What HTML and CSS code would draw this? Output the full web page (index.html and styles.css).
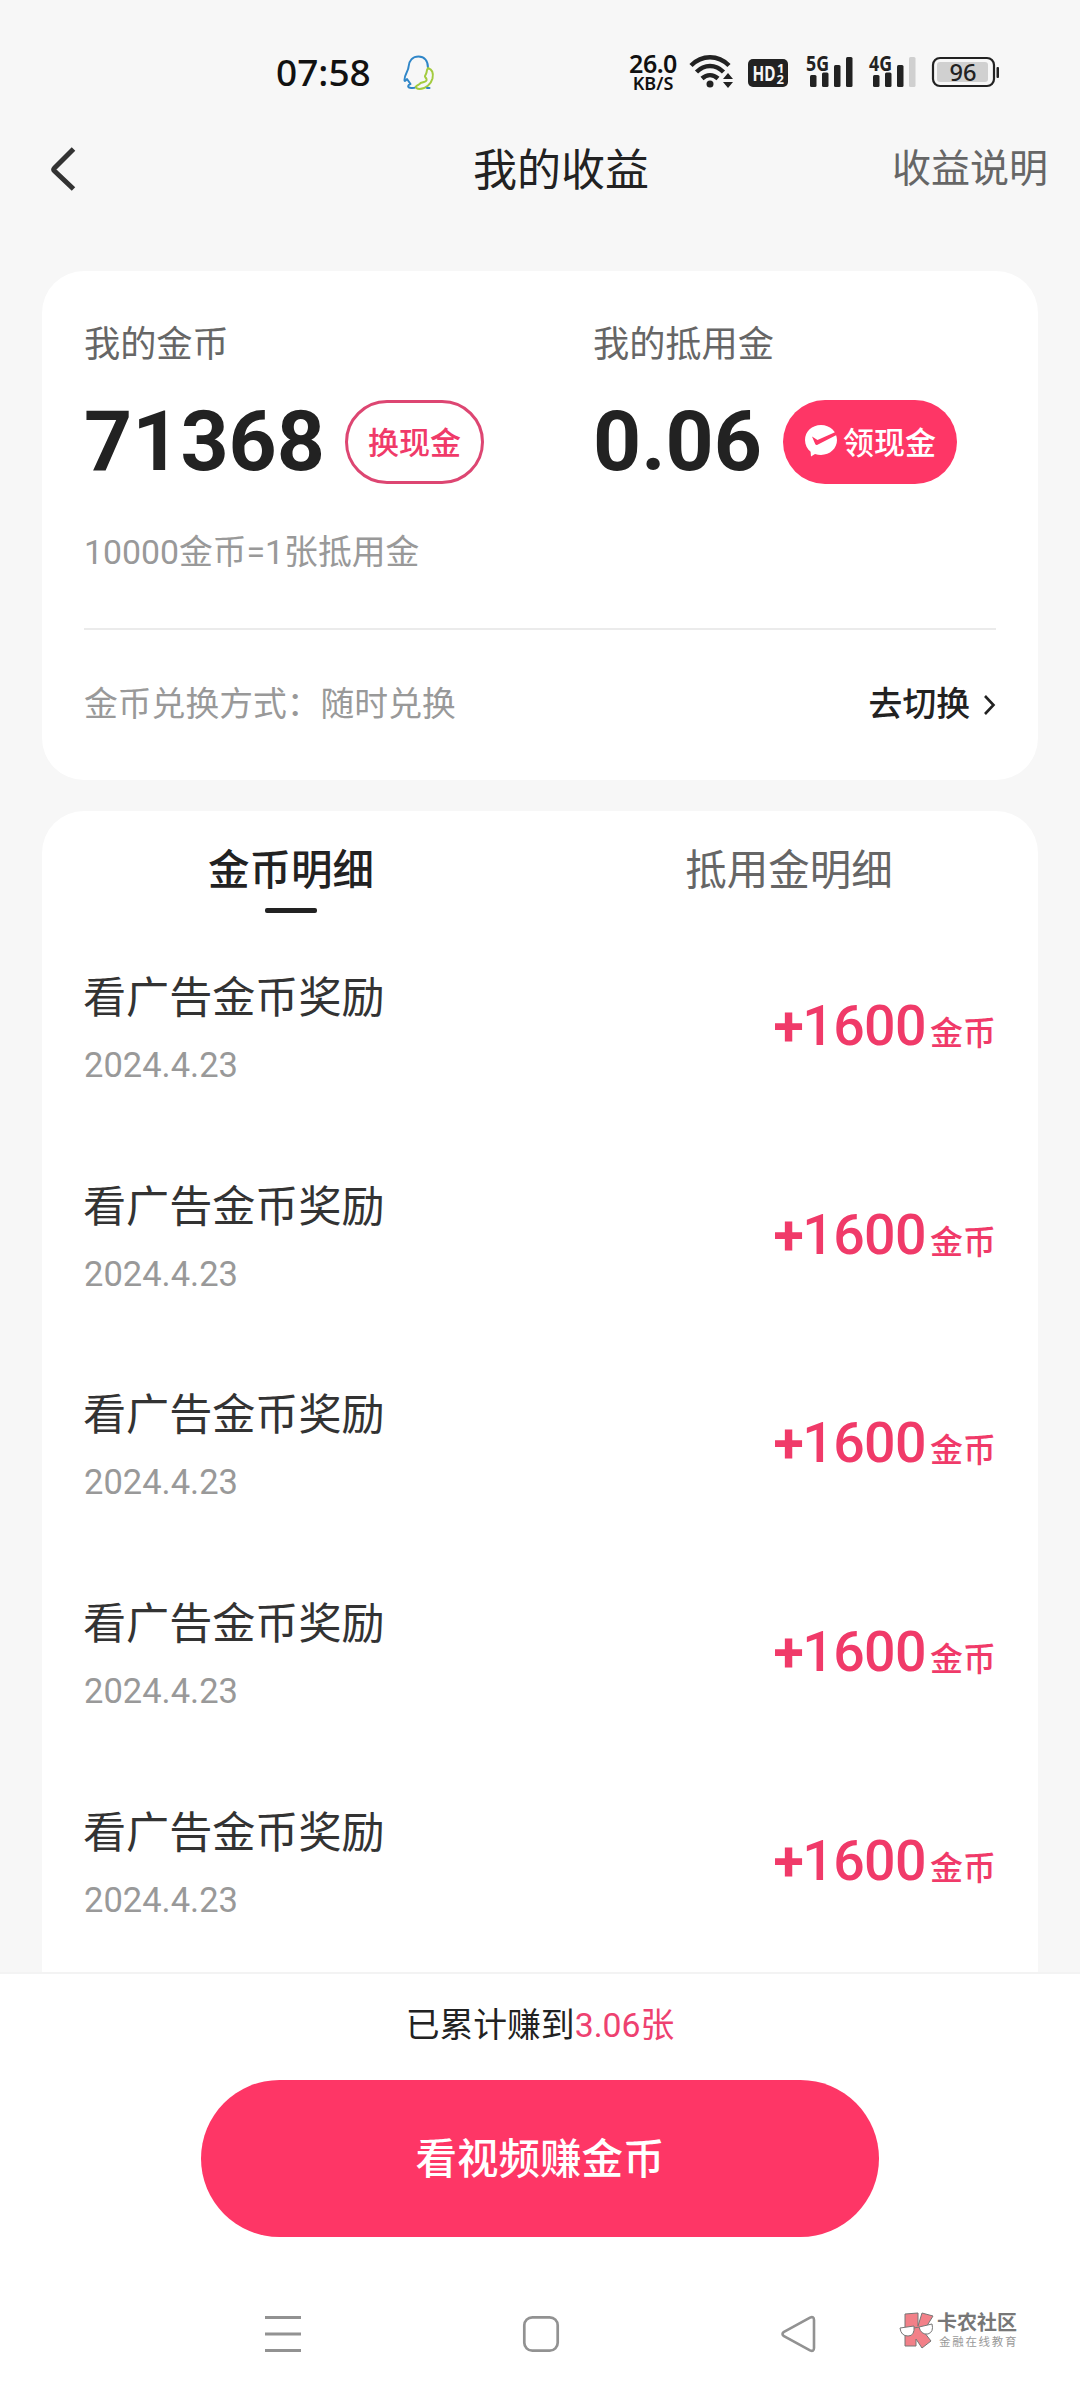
FILE: index.html
```html
<!DOCTYPE html>
<html lang="zh-CN">
<head>
<meta charset="utf-8">
<title>我的收益</title>
<link rel="stylesheet" href="styles.css">
</head>
<body>
<div class="screen">
  <div class="status">
    <span class="time">07:58</span>
    <svg class="qq" width="34" height="38" viewBox="0 0 34 38" fill="none" stroke-width="2" stroke-linejoin="round" stroke-linecap="round">
      <path stroke="#2f86c8" d="M26 14C26 6.500 22 2.500 16.500 2.500S7 6.500 6.500 13C6.500 17 2.500 20 2.500 26c0 1.500 1 1 2.500-1l3.500 5c-3 1-3 3.500-.5 3.800 2 .4 4.500.2 6-.8"/>
      <path stroke="#a3cb3f" d="M26 14c4.500 1.500 5.500 6 4.500 10.500C29 30 24 35 17.500 35c-2.500 0-4-1.500-3.500-2.500 1-1.500 4-2 4.500-3.500L22 28c2-.5 3-1.500 2.500-3s-2-2-1.500-3 1-1.500 1.500-3.500c.4-1.500 0-2.500 1.500-4.500z"/>
      <path stroke="#2f86c8" d="M25 34h2.500"/>
    </svg>
    <div class="speed"><span class="speed-value">26.0</span><span class="speed-unit">KB/S</span></div>
    <svg class="wifi" width="46" height="36" viewBox="0 0 46 36">
      <g fill="none" stroke="#222" stroke-width="4.500">
        <path d="M2 12.500C13 1.500 29 1.500 40 12.500"/>
        <path d="M7.500 19c8-8 19-8 27 0"/>
        <path d="M13 25.500c5-4.500 11-4.500 16 0"/>
      </g>
      <circle cx="21" cy="31" r="3.500" fill="#222"/>
      <path fill="#222" d="M34 26l5-6 5 6zM34 29h10l-5 6z"/>
    </svg>
    <svg class="hd" width="40" height="28" viewBox="0 0 40 28">
      <rect width="40" height="28" rx="5" fill="#222"/>
      <g fill="#f7f7f7" class="label"><text x="4.500" y="22" font-size="22" textLength="23" lengthAdjust="spacingAndGlyphs">HD</text><text x="29" y="13.500" font-size="13">1</text><text x="28.500" y="25" font-size="13">2</text></g>
    </svg>
    <svg class="signal" width="50" height="36" viewBox="0 0 50 36">
      <text class="label" x="1" y="18" font-size="22" fill="#222" textLength="23" lengthAdjust="spacingAndGlyphs">5G</text>
      <g fill="#222"><rect x="5" y="22" width="6.500" height="12" rx="1.500"/><rect x="17" y="19.500" width="6.500" height="14.500" rx="1.500"/><rect x="29" y="12" width="6.500" height="22" rx="1.500"/><rect x="41" y="4" width="6.500" height="30" rx="1.500"/></g>
    </svg>
    <svg class="signal second" width="50" height="36" viewBox="0 0 50 36">
      <text class="label" x="1" y="18" font-size="22" fill="#222" textLength="23" lengthAdjust="spacingAndGlyphs">4G</text>
      <g fill="#222"><rect x="5" y="22" width="6.500" height="12" rx="1.500"/><rect x="17" y="19.500" width="6.500" height="14.500" rx="1.500"/><rect x="29" y="12" width="6.500" height="22" rx="1.500"/></g><rect x="41" y="4" width="6.500" height="30" rx="1.500" fill="#d0d0d0"/>
    </svg>
    <svg class="battery" width="68" height="32" viewBox="0 0 68 32">
      <rect x="1" y="2" width="61" height="28" rx="7" fill="#f7f7f7" stroke="#222" stroke-width="2.200"/>
      <rect x="5" y="6" width="51" height="20" rx="3" fill="#d0d0d0"/>
      <rect x="64.500" y="11" width="2.500" height="11" rx="1" fill="#222"/>
      <text class="digits" x="17.500" y="24.500" font-size="24" fill="#222" textLength="27" lengthAdjust="spacingAndGlyphs">96</text>
    </svg>
  </div>

  <header class="topbar">
    <svg class="back" width="28" height="46" viewBox="0 0 28 46" fill="none" stroke="#333" stroke-width="5"><path d="M24.500 3L5.500 22q-1.500 1.500 0 3l19 18"/></svg>
    <h1 class="title">我的收益</h1>
    <a class="help">收益说明</a>
  </header>

  <main class="content">
    <section class="card balance">
      <div class="accounts">
        <div class="account">
          <div class="account-name">我的金币</div>
          <div class="account-row"><span class="number">71368</span><button class="pill outline">换现金</button></div>
        </div>
        <div class="account">
          <div class="account-name">我的抵用金</div>
          <div class="account-row"><span class="number">0.06</span><button class="pill solid">
            <svg width="34" height="34" viewBox="0 0 34 34"><path fill="#fff" d="M17 1C8 1 1 7.500 1 16c0 5 2.300 9 5.600 11.700L7 32.500l4-2.500c2 .6 4 .9 6 .9 9 0 16-6.500 16-14.900S26 1 17 1z"/><path fill="#fe3666" d="M8 12.500l5.500 3.500L31.500 8l1 3-19 9.800q-1.500.8-2.300-.8z"/></svg>领现金</button></div>
        </div>
      </div>
      <div class="rate">10000金币=1张抵用金</div>
      <div class="method">
        <span class="method-text">金币兑换方式：随时兑换</span>
        <span class="switch">去切换<svg width="14" height="22" viewBox="0 0 14 22" fill="none" stroke="#222" stroke-width="2.600"><path d="M2 2l8.500 9L2 20"/></svg></span>
      </div>
    </section>

    <section class="card detail">
      <nav class="tabs"><span class="tab active">金币明细</span><span class="tab">抵用金明细</span></nav>
      <ul class="list">
        <li class="item"><div><div class="item-name">看广告金币奖励</div><div class="item-date">2024.4.23</div></div><div class="amount"><span class="plus">+</span>1600<span class="unit">金币</span></div></li>
        <li class="item"><div><div class="item-name">看广告金币奖励</div><div class="item-date">2024.4.23</div></div><div class="amount"><span class="plus">+</span>1600<span class="unit">金币</span></div></li>
        <li class="item"><div><div class="item-name">看广告金币奖励</div><div class="item-date">2024.4.23</div></div><div class="amount"><span class="plus">+</span>1600<span class="unit">金币</span></div></li>
        <li class="item"><div><div class="item-name">看广告金币奖励</div><div class="item-date">2024.4.23</div></div><div class="amount"><span class="plus">+</span>1600<span class="unit">金币</span></div></li>
        <li class="item"><div><div class="item-name">看广告金币奖励</div><div class="item-date">2024.4.23</div></div><div class="amount"><span class="plus">+</span>1600<span class="unit">金币</span></div></li>
      </ul>
    </section>
  </main>

  <footer class="bottom">
    <div class="total">已累计赚到<span class="total-value">3.06张</span></div>
    <button class="watch">看视频赚金币</button>
  </footer>

  <div class="navbar">
    <svg class="nav-menu" width="36" height="38" viewBox="0 0 36 38" stroke="#929292" stroke-width="3"><path d="M0 2.500h36M0 19h36M0 35.500h36"/></svg>
    <svg class="nav-home" width="38" height="38" viewBox="0 0 38 38" fill="none" stroke="#929292" stroke-width="2.700"><rect x="2.300" y="2.300" width="33.400" height="33.400" rx="8"/></svg>
    <svg class="nav-back" width="38" height="38" viewBox="0 0 38 38" fill="none" stroke="#929292" stroke-width="2.600" stroke-linejoin="round"><path d="M3.500 17.200L30 2.600Q34 1 34 5v28q0 4-4 2.400L3.500 20.800Q1.500 19 3.500 17.200z"/></svg>
    <div class="brand">
      <svg width="36" height="38" viewBox="0 0 36 38" stroke="#777" stroke-width="1" stroke-linejoin="round">
        <path fill="#f28088" d="M6 3l13-1v13l4-13 11 3-8 13-1 3 7 9-9 7-6-9v7H6z"/>
        <path fill="#fff" d="M1 17l14-2q1 10-6 10Q2 25 1 17zM20 16l13-3q2 8-4 10-7 1-9-7z"/>
        <path fill="none" d="M15 17l5-1"/>
      </svg>
      <div class="brand-text"><span class="brand-name">卡农社区</span><span class="brand-sub">金融在线教育</span></div>
    </div>
  </div>
</div>
</body>
</html>
```
FILE: styles.css
```css
* { box-sizing: border-box; }
body { margin: 0; background: #f7f7f7; }
svg { display: block; flex: none; overflow: visible; }
button { border: 0; margin: 0; padding: 0; font-family: inherit; }
.screen {
  width: 1080px; height: 2400px; overflow: hidden;
  display: flex; flex-direction: column;
  font-family: Roboto, "Noto Sans CJK SC", sans-serif;
  color: #222; background: #f7f7f7; white-space: nowrap;
}

.status { height: 120px; padding: 0 80px 0 276px; display: flex; align-items: flex-start; font-family: "Noto Sans", sans-serif; color: #111; }
.time { width: 126px; margin-top: 52px; font-size: 37px; line-height: 40px; font-weight: 500; }
.qq { margin-top: 54px; }
.speed { width: 60px; margin: 51px 0 0 187px; display: flex; flex-direction: column; align-items: center; font-weight: 600; }
.speed-value { font-size: 25px; line-height: 25px; letter-spacing: -.5px; }
.speed-unit { font-size: 18px; line-height: 14px; }
.wifi { margin: 53px 0 0 6px; }
.hd { margin: 59px 0 0 13px; }
.signal { margin: 53px 0 0 17px; }
.signal.second { margin-left: 13px; }
.battery { margin: 56px 0 0 14px; }
.label { font-family: "Noto Sans", sans-serif; font-weight: 700; }
.digits { font-family: "Noto Sans", sans-serif; font-weight: 500; }

.topbar { height: 151px; padding: 26px 32px 0 49px; display: grid; grid-template-columns: 424px auto 1fr; align-items: start; }
.title { margin: 0; font-size: 44px; line-height: 50px; font-weight: 400; }
.help { justify-self: end; font-size: 39px; line-height: 46px; color: #666; }

.content { flex: 1; min-height: 0; padding: 0 42px; display: flex; flex-direction: column; gap: 31px; overflow: hidden; }
.card { background: #fff; border-radius: 42px; }
.balance { flex: none; height: 509px; padding: 52px 42px 0; }
.accounts { display: grid; grid-template-columns: 509px 1fr; }
.account-name { font-size: 36.200px; line-height: 44px; color: #666; }
.account-row { margin-top: 33px; display: flex; align-items: center; }
.number { font-size: 84px; line-height: 84px; font-weight: 700; }
.pill { height: 84px; border-radius: 42px; font-size: 31px; font-weight: 500; display: flex; align-items: center; justify-content: center; padding-bottom: 3px; }
.outline { width: 139px; margin-left: 20px; border: 3px solid #dd4672; color: #f03a69; background: #fff; }
.solid { width: 174px; margin-left: 21px; gap: 5px; color: #fff; background: #fe3666; }
.rate { margin-top: 47px; font-size: 33.800px; line-height: 44px; color: #999; }
.method { margin-top: 53px; padding-top: 53px; border-top: 2px solid #ebebeb; display: flex; justify-content: space-between; font-size: 33.800px; line-height: 44px; color: #999; }
.switch { display: flex; align-items: center; gap: 13px; margin-right: -1px; font-weight: 500; color: #222; }

.detail { flex: none; height: 1300px; }
.tabs { display: grid; grid-template-columns: 1fr 1fr; height: 134px; }
.tab { padding-top: 35px; display: flex; flex-direction: column; align-items: center; font-size: 41.500px; line-height: 50px; color: #666; }
.active { color: #222; font-weight: 500; }
.active::after { content: ""; width: 52px; height: 5px; margin-top: 12px; border-radius: 2px; background: #222; }
.list { margin: 0; padding: 0 42px; list-style: none; }
.item { height: 208.700px; padding-top: 28px; display: flex; justify-content: space-between; align-items: flex-start; }
.item-name { margin-left: -1px; font-size: 43.100px; line-height: 52px; color: #333; }
.item-date { margin-top: 20px; font-size: 34.500px; line-height: 40px; color: #999; }
.amount { margin-top: 21px; font-size: 55.500px; line-height: 66px; font-weight: 500; letter-spacing: -.6px; color: #f03a69; }
.plus { font-weight: 700; margin-right: -1px; }
.unit { margin-left: 4px; font-size: 33px; letter-spacing: 0; }

.bottom { flex: none; height: 308px; border-top: 2px solid #f3f3f3; padding-top: 30px; background: #fff; display: flex; flex-direction: column; align-items: center; }
.total { font-size: 33.800px; line-height: 44px; }
.total-value { color: #ee4170; }
.watch { width: 678px; height: 157px; margin-top: 32px; padding-bottom: 6px; border-radius: 79px; background: #fe3666; color: #fff; font-size: 41.500px; font-weight: 500; }

.navbar { flex: none; height: 120px; padding: 35px 0 0 265px; background: #fff; display: flex; align-items: flex-start; }
.nav-home { margin-left: 221px; }
.nav-back { margin-left: 220px; }
.brand { display: flex; gap: 2px; margin: -4px 0 0 81px; }
.brand-text { display: flex; flex-direction: column; padding-top: 1px; color: #777; }
.brand-name { font-size: 20px; line-height: 23px; font-weight: 700; }
.brand-sub { margin-left: 2px; font-size: 11.500px; line-height: 14px; letter-spacing: 1.700px; color: #999; }
```
